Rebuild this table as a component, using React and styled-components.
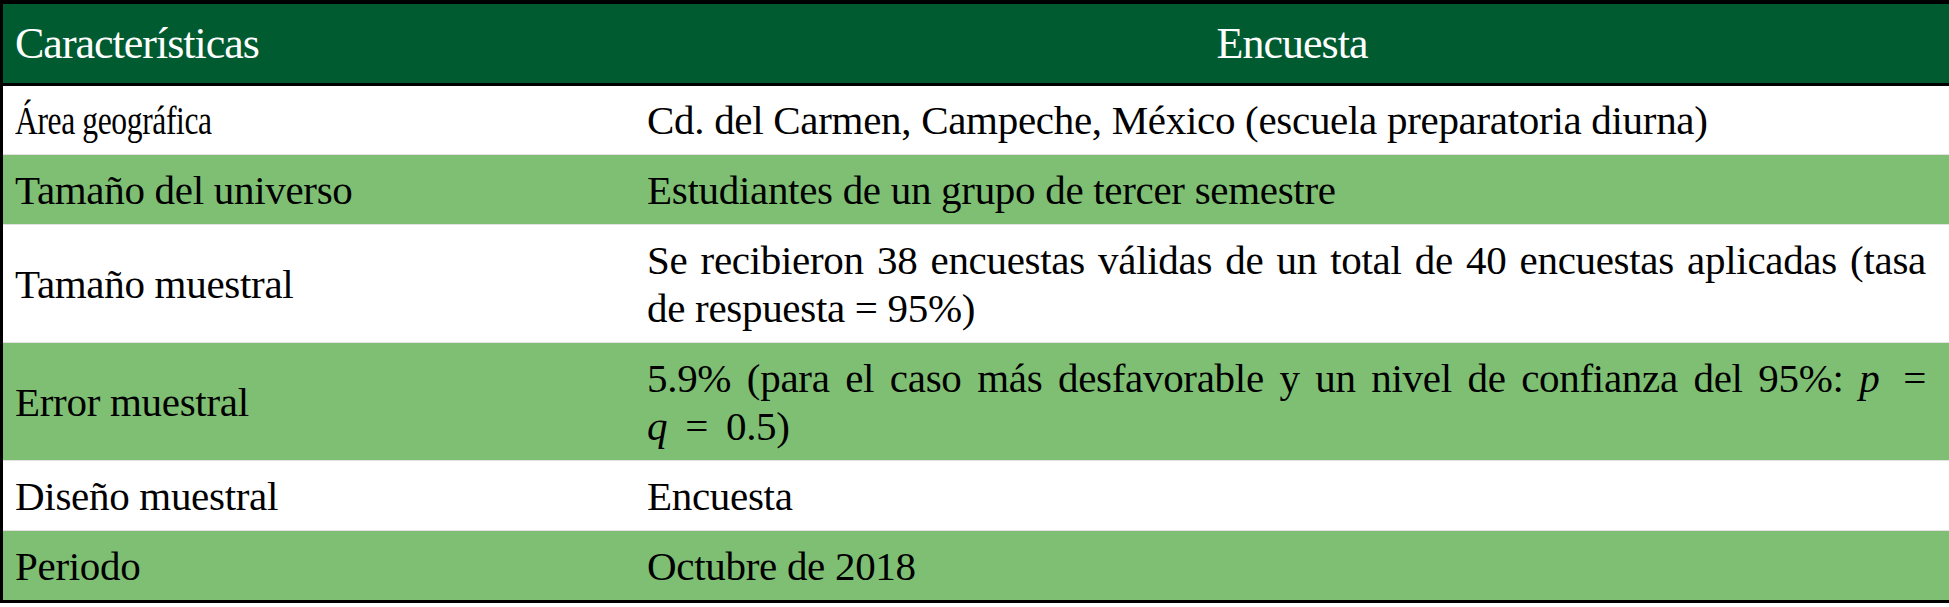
import React from "react";
import styled, { createGlobalStyle } from "styled-components";

const Global = createGlobalStyle`
  html, body { margin: 0; padding: 0; background: #ffffff; }
  body { font-family: "Liberation Serif", "Times New Roman", serif; }
`;

const Table = styled.div`
  width: 1949px;
  border-top: 4px solid #000;
  border-left: 3px solid #000;
  border-bottom: 3px solid #000;
  box-sizing: border-box;
  font-family: "Liberation Serif", "Times New Roman", serif;
`;

const HeaderRow = styled.div`
  display: grid;
  grid-template-columns: 632px 1fr;
  height: 79px;
  background: #005b31;
  border-bottom: 3px solid #000;
  color: #ffffff;
  font-size: 44px;
  line-height: 79px;
  letter-spacing: -1px;
`;

const HeadCell = styled.div`
  padding: 0 12px;
  text-align: ${(p) => p.$align || "left"};
  white-space: nowrap;
`;

const Row = styled.div`
  display: grid;
  grid-template-columns: 632px 1fr;
  background: ${(p) => (p.$shaded ? "#7fbf74" : "#ffffff")};
  border-top: ${(p) => (p.$first ? "none" : "1px solid #e2e2e2")};
  color: #000;
  font-size: 41px;
  line-height: 48px;
  letter-spacing: -0.3px;
`;

const Label = styled.div`
  display: flex;
  align-items: center;
  padding: ${(p) => (p.$first ? "10px" : "11px")} 12px 10px 12px;
  white-space: nowrap;
`;

/* condensed character run, as in the source document */
const Condensed = styled.span`
  display: inline-block;
  transform: scaleX(0.77);
  transform-origin: left center;
  letter-spacing: -0.5px;
`;

const Value = styled.div`
  padding: ${(p) => (p.$first ? "10px" : "11px")} 23px 10px 12px;
`;

const Line = styled.div`
  text-align: ${(p) => (p.$justify ? "justify" : "left")};
  text-align-last: ${(p) => (p.$justify ? "justify" : "left")};
  white-space: nowrap;
`;

const Var = styled.i`
  font-style: italic;
`;

const Op = styled.span`
  padding: ${(p) => (p.$end ? "0 0 0 8px" : "0 8px")};
`;

const rows = [
  {
    label: <Condensed>Área geográfica</Condensed>,
    key: "area",
    lines: ["Cd. del Carmen, Campeche, México (escuela preparatoria diurna)"],
  },
  {
    label: "Tamaño del universo",
    lines: ["Estudiantes de un grupo de tercer semestre"],
  },
  {
    label: "Tamaño muestral",
    lines: [
      "Se recibieron 38 encuestas válidas de un total de 40 encuestas aplicadas (tasa",
      "de respuesta = 95%)",
    ],
  },
  {
    label: "Error muestral",
    lines: [
      <>
        5.9% (para el caso más desfavorable y un nivel de confianza del 95%: <Var>p</Var>{" "}
        <Op $end>=</Op>
      </>,
      <>
        <Var>q</Var> <Op>=</Op> 0.5)
      </>,
    ],
  },
  { label: "Diseño muestral", lines: ["Encuesta"] },
  { label: "Periodo", lines: ["Octubre de 2018"] },
];

export default function App() {
  return (
    <>
      <Global />
      <Table>
        <HeaderRow>
          <HeadCell>Características</HeadCell>
          <HeadCell $align="center">Encuesta</HeadCell>
        </HeaderRow>
        {rows.map((r, i) => (
          <Row key={r.key || r.label} $shaded={i % 2 === 1} $first={i === 0}>
            <Label $first={i === 0}>{r.label}</Label>
            <Value $first={i === 0}>
              {r.lines.map((l, j) => (
                <Line key={j} $justify={r.lines.length > 1 && j < r.lines.length - 1}>
                  {l}
                </Line>
              ))}
            </Value>
          </Row>
        ))}
      </Table>
    </>
  );
}
